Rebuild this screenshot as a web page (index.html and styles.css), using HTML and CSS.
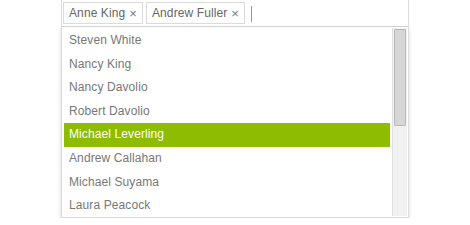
FILE: index.html
```html
<!DOCTYPE html>
<html lang="en">
<head>
    <meta charset="UTF-8">
    <title>MultiSelect</title>
    <link rel="stylesheet" href="styles.css">
</head>
<body>

    <div class="multiselect">
        <div class="ms-input">
            <span class="tag">Anne King <span class="tag-x">&#215;</span></span>
            <span class="tag">Andrew Fuller <span class="tag-x">&#215;</span></span>
            <span class="caret"></span>
        </div>

        <div class="ms-popup">
            <ul class="ms-list">
                <li>Steven White</li>
                <li>Nancy King</li>
                <li>Nancy Davolio</li>
                <li>Robert Davolio</li>
                <li class="selected">Michael Leverling</li>
                <li>Andrew Callahan</li>
                <li>Michael Suyama</li>
                <li>Laura Peacock</li>
            </ul>
            <!-- barra de rolagem desenhada -->
            <div class="scroll-track">
                <div class="scroll-thumb"></div>
            </div>
        </div>
    </div>

</body>
</html>
```

FILE: styles.css
```css
body {
    margin: 0;
    background-color: #ffffff;
    font-family: "Liberation Sans", Arial, sans-serif;
    font-size: 12px;
    color: #787878;
}

.multiselect {
    width: 348px;
    margin-left: 61px;
    margin-top: -1px;
}

.ms-input {
    display: flex;
    align-items: flex-start;
    gap: 3px;
    height: 26px;
    padding: 0 1px;
    border: 1px solid #dbdbdb;
    border-bottom-color: #d4d4d4;
    background-color: #ffffff;
}

.tag {
    display: flex;
    align-items: center;
    height: 20px;
    margin-top: 2px;
    padding: 0 5px;
    border: 1px solid #dbdbdb;
    color: #666666;
    font-size: 12px;
    letter-spacing: 0.1px;
}

.tag-x {
    margin-left: 4px;
    color: #777777;
    font-size: 13px;
}

.caret {
    width: 1px;
    height: 16px;
    margin-left: 3px;
    margin-top: 6px;
    background-color: #999999;
}

.ms-popup {
    display: flex;
    height: 190px;
    border: 1px solid #dbdbdb;
    border-top: none;
    background-color: #ffffff;
    box-shadow: 0 2px 4px rgba(0, 0, 0, 0.15);
    overflow: hidden;
}

.ms-list {
    flex: 1;
    list-style: none;
    margin: 0;
    padding: 2px 2px 0 2px;
}

.ms-list li {
    height: 23.6px;
    line-height: 23.6px;
    padding-left: 5px;
    white-space: nowrap;
    letter-spacing: 0.1px;
}

.ms-list li.selected {
    background-color: #8ebc00;
    color: #ffffff;
}

.scroll-track {
    width: 14px;
    margin: 1px 1px 1px 0;
    background-color: #f1f1f1;
    border-left: 1px solid #e2e2e2;
    padding-top: 1px;
}

.scroll-thumb {
    width: 10px;
    height: 95px;
    margin-left: 1px;
    background-color: #d6d6d6;
    border: 1px solid #b8b8b8;
    border-radius: 1px;
}
```
